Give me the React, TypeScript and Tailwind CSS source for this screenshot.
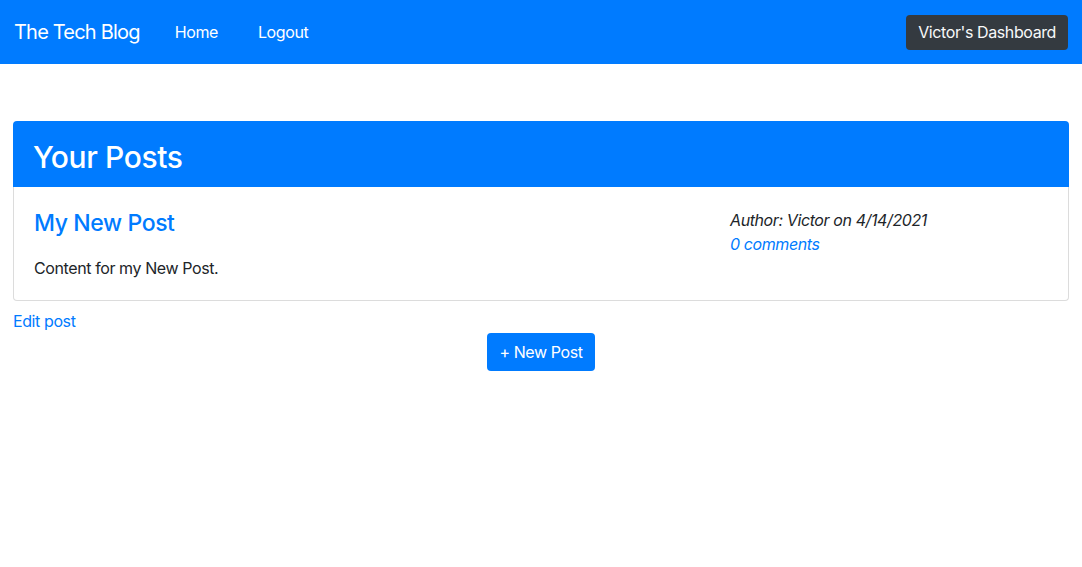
import React from "react";

const posts = [
    {
        title: "My New Post",
        content: "Content for my New Post.",
        author: "Victor",
        date: "4/14/2021",
        comments: 0,
    },
];

const Navbar = () => (
    <nav className="flex h-16 items-center justify-between bg-[#007bff] px-[14px]">
        <div className="flex items-center">
            <a className="text-[20px] leading-[30px] tracking-[-0.04em] text-white">The Tech Blog</a>
            <ul className="ml-[19px] flex items-center">
                <li>
                    <a className="block px-4 text-base text-white">Home</a>
                </li>
                <li>
                    <a className="ml-[8px] block px-4 text-base text-white">Logout</a>
                </li>
            </ul>
        </div>
        <button className="h-[35px] rounded bg-[#343a40] px-3 text-base text-[#f8f9fa]">Victor's Dashboard</button>
    </nav>
);

const PostCard = ({ title, content, author, date, comments }: (typeof posts)[number]) => (
    <div className="rounded-b border border-t-0 border-[#dcdcdc] bg-white px-5 pb-5 pt-5">
        <div className="grid grid-cols-[1fr_318px]">
            <div>
                <h4 className="pt-[2px] text-[23px] font-medium leading-[29px] text-[#007bff]">{title}</h4>
                <p className="mt-[18px] text-base leading-6 text-[#212529]">{content}</p>
            </div>
            <div className="pt-[1px]">
                <p className="text-base italic leading-6 text-[#212529]">
                    Author: {author} on {date}
                </p>
                <a className="block text-base italic leading-6 text-[#007bff]">{comments} comments</a>
            </div>
        </div>
    </div>
);

export default function App() {
    return (
        <div className="min-h-screen bg-white font-['Inter',sans-serif] tracking-[-0.025em] text-[#212529]">
            <Navbar />
            <main className="px-[13px] pt-[57px]">
                <div className="flex h-[66px] items-center rounded-t bg-[#007bff] px-5 pt-[6px]">
                    <h2 className="text-[30px] font-medium leading-9 text-white">Your Posts</h2>
                </div>
                {posts.map((p, i) => (
                    <PostCard key={i} {...p} />
                ))}
                <a className="block pt-[8px] text-base leading-6 text-[#007bff]">Edit post</a>
                <div className="flex justify-center">
                    <button className="h-[38px] rounded bg-[#007bff] px-3 text-base text-white">+ New Post</button>
                </div>
            </main>
        </div>
    );
}
